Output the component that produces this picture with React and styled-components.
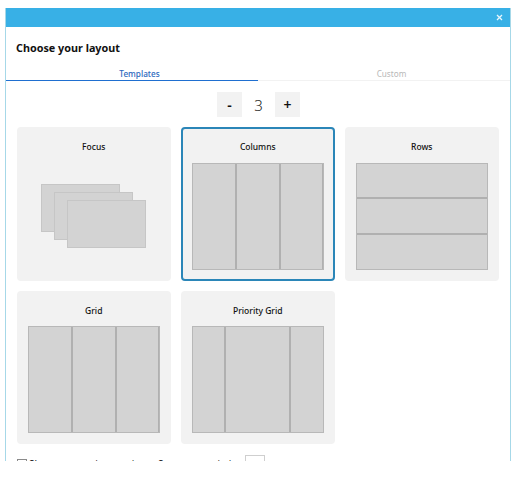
import React from "react";
import styled, { createGlobalStyle } from "styled-components";

const GlobalStyle = createGlobalStyle`
  html, body {
    margin: 0;
    background: #fff;
  }
  body {
    font-family: "Noto Sans", "Open Sans", sans-serif;
  }
`;

const Dialog = styled.div`
  width: 506px;
  height: 453px;
  margin: 8px 0 0 5px;
  box-sizing: border-box;
  border-left: 1px solid #a6d8e8;
  border-right: 1px solid #a6d8e8;
  overflow: hidden;
`;

const TitleBar = styled.div`
  height: 19px;
  margin: 0 -1px;
  padding-right: 8px;
  background: #38b0e6;
  display: flex;
  align-items: center;
  justify-content: flex-end;
  color: #e8f6fc;
`;

const Heading = styled.h1`
  margin: 0;
  height: 39px;
  padding: 13px 0 0 10px;
  box-sizing: border-box;
  font-size: 10.8px;
  line-height: 16px;
  font-weight: 700;
  color: #111;
`;

const Tabs = styled.div`
  display: grid;
  grid-template-columns: 252px 1fr;
  height: 15px;
`;

const Tab = styled.div`
  box-sizing: border-box;
  padding: 1px 0 0 15px;
  text-align: center;
  font-size: 8.2px;
  line-height: 13px;
  font-weight: ${props => (props.$active ? 500 : 400)};
  color: ${props => (props.$active ? "#2a68bd" : "#b8b8b8")};
  border-bottom: ${props =>
    props.$active ? "1px solid #1f6fd0" : "1px solid #f2f2f2"};
`;

const Stepper = styled.div`
  display: flex;
  justify-content: center;
  align-items: center;
  margin: 11px 0 10px;
  padding-left: 1px;
`;

const StepButton = styled.button`
  width: 25px;
  height: 25px;
  padding: 0;
  border: 0;
  background: #f2f2f2;
  font-family: inherit;
  font-size: 14px;
  font-weight: 600;
  color: #111;
`;

const StepValue = styled.span`
  width: 33px;
  text-align: center;
  font-size: 15px;
  font-weight: 300;
  color: #222;
`;

const CardGrid = styled.div`
  display: grid;
  grid-template-columns: repeat(3, 153.5px);
  grid-auto-rows: 153.5px;
  column-gap: 10.5px;
  row-gap: 10px;
  padding-left: 11px;
`;

const Card = styled.div`
  box-sizing: border-box;
  padding: ${props => (props.$selected ? "9px" : "11px")};
  padding-top: 0;
  background: #f2f2f2;
  border-radius: 4px;
  border: ${props => (props.$selected ? "2px solid #2b86b8" : "0")};
  display: flex;
  flex-direction: column;
`;

const CardTitle = styled.div`
  height: ${props => (props.$selected ? "34px" : "36px")};
  padding-top: ${props => (props.$selected ? "11px" : "13px")};
  box-sizing: border-box;
  text-align: center;
  font-size: 8.5px;
  line-height: 14px;
  font-weight: 500;
  color: #111;
`;

const Preview = styled.div`
  height: 107px;
  display: flex;
  flex-direction: ${props => (props.$rows ? "column" : "row")};
  gap: 2px;
  background: #b0b0b0;
  border: 1px solid #b8b8b8;
  box-sizing: border-box;
`;

const Pane = styled.div`
  flex: ${props => props.$grow || 1};
  background: #d3d3d3;
`;

const FocusCanvas = styled.div`
  position: relative;
  flex: 1;
`;

const FocusSheet = styled.div`
  position: absolute;
  left: ${props => props.$x}px;
  top: ${props => props.$y}px;
  width: 79px;
  height: 48px;
  box-sizing: border-box;
  background: #d3d3d3;
  border: 1px solid #c6c6c6;
`;

const Footer = styled.div`
  display: flex;
  align-items: flex-start;
  margin-top: 10.5px;
  padding-left: 11px;
  font-size: 10px;
  line-height: 14px;
  color: #222;
`;

const CheckBox = styled.span`
  width: 8px;
  height: 8px;
  margin: 4px 2px 0 0;
  border: 1px solid #8a8a8a;
  flex: none;
`;

const FooterLabel = styled.span`
  margin-top: 2px;
  width: ${props => props.$width}px;
  flex: none;
  white-space: nowrap;
  overflow: hidden;
`;

const SizeInput = styled.span`
  width: 20px;
  height: 20px;
  box-sizing: border-box;
  border: 1px solid #cfcfcf;
  text-align: center;
  line-height: 18px;
  font-size: 9px;
`;

const CloseIcon = () => (
  <svg width="7" height="7" viewBox="0 0 7 7" aria-hidden="true">
    <path d="M1 1l5 5M6 1L1 6" stroke="currentColor" strokeWidth="1.3" />
  </svg>
);

const splits = {
  Columns: [1, 1, 1],
  Rows: [1, 1, 1],
  Grid: [1, 1, 1],
  "Priority Grid": [1, 2, 1]
};

const templates = ["Focus", "Columns", "Rows", "Grid", "Priority Grid"];

const App = () => (
  <>
    <GlobalStyle />
    <Dialog>
      <TitleBar>
        <CloseIcon />
      </TitleBar>
      <Heading>Choose your layout</Heading>
      <Tabs>
        <Tab $active>Templates</Tab>
        <Tab>Custom</Tab>
      </Tabs>
      <Stepper>
        <StepButton>-</StepButton>
        <StepValue>3</StepValue>
        <StepButton>+</StepButton>
      </Stepper>
      <CardGrid>
        {templates.map(name => {
          const selected = name === "Columns";
          return (
            <Card key={name} $selected={selected}>
              <CardTitle $selected={selected}>{name}</CardTitle>
              {name === "Focus" ? (
                <FocusCanvas>
                  <FocusSheet $x={13} $y={21} />
                  <FocusSheet $x={26} $y={29} />
                  <FocusSheet $x={39} $y={37} />
                </FocusCanvas>
              ) : (
                <Preview $rows={name === "Rows"}>
                  {splits[name].map((grow, i) => (
                    <Pane key={i} $grow={grow} />
                  ))}
                </Preview>
              )}
            </Card>
          );
        })}
      </CardGrid>
      <Footer>
        <CheckBox />
        <FooterLabel $width={129}>Show screens in margin</FooterLabel>
        <FooterLabel $width={87}>Screen margin in px:</FooterLabel>
        <SizeInput>10</SizeInput>
      </Footer>
    </Dialog>
  </>
);

export default App;
